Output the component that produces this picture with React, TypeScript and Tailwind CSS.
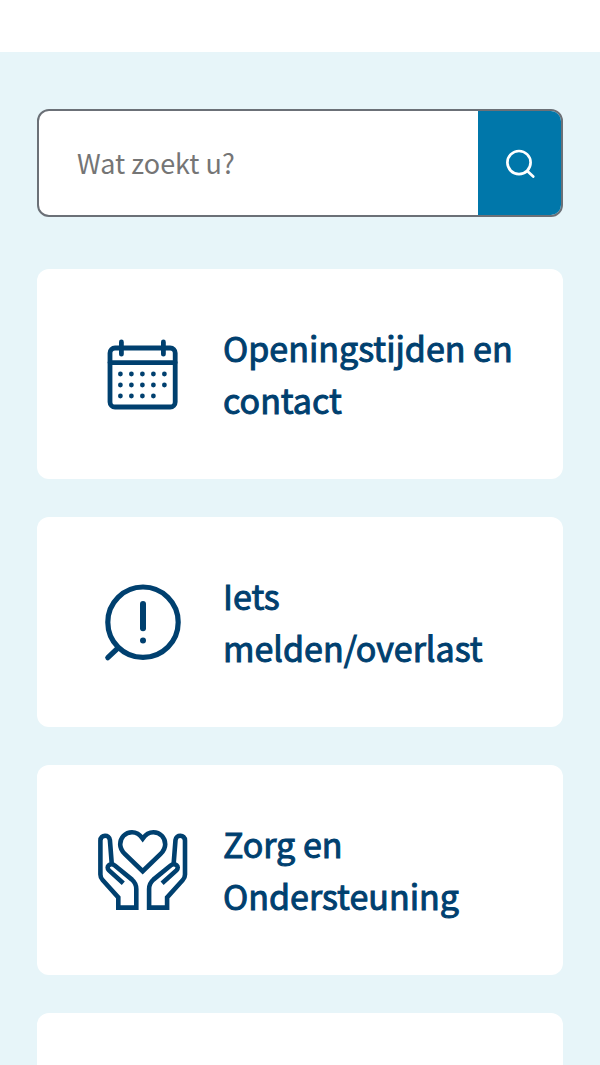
import type { ReactNode } from 'react'

function CalendarIcon() {
  return (
    <svg viewBox="0 0 90 90" className="size-[90px] shrink-0" fill="none" stroke="currentColor" strokeWidth="4.8" strokeLinecap="round" aria-hidden="true">
      <rect x="12" y="19" width="65.2" height="59" rx="5" />
      <path d="M12 33.6H77.2M23.4 13V25.2M65.4 13V25.2" />
      <g fill="currentColor" stroke="none">
        {[45, 56, 67].map((y) =>
          [22.4, 33.4, 44.4, 55.4, 66.4]
            .filter((x) => y < 67 || x < 66)
            .map((x) => <circle key={`${x}-${y}`} cx={x} cy={y} r="2.4" />)
        )}
      </g>
    </svg>
  )
}

function ReportIcon() {
  return (
    <svg viewBox="0 0 90 90" className="size-[90px] shrink-0" fill="none" stroke="currentColor" strokeWidth="5.2" strokeLinecap="round" aria-hidden="true">
      <circle cx="45" cy="45.2" r="35.2" />
      <path d="M20 71L9.8 80.7" />
      <path d="M45 27V51.3" strokeWidth="6" />
      <circle cx="45" cy="63.5" r="3" fill="currentColor" stroke="none" />
    </svg>
  )
}

function HandPath() {
  return (
    <path d="M13.8 39.4L11.9 15C11.4 9.2 2.4 9.4 2.4 15.5V49.5C2.4 52 3 53.3 4.6 55L20.3 72.4V82.6H38.3V64C38.3 59.6 37.4 57.6 34 54.6L16.8 40.5C12.4 37.2 7.2 41.6 11 45.4L25.3 58.3" />
  )
}

function CareIcon() {
  return (
    <svg viewBox="0 0 90 90" className="size-[90px] shrink-0" fill="none" stroke="currentColor" strokeWidth="4.6" aria-hidden="true">
      <path d="M44.7 13.6C41.2 8.6 37.8 7.2 34 7.2C27.2 7.2 22.2 12.6 22.2 19.2C22.2 23.4 24 26.2 27 29.2L44.7 46.2L62.4 29.2C65.4 26.2 67.2 23.4 67.2 19.2C67.2 12.6 62.2 7.2 55.4 7.2C51.6 7.2 48.2 8.6 44.7 13.6Z" />
      <HandPath />
      <g transform="translate(89.4 0) scale(-1 1)">
        <HandPath />
      </g>
    </svg>
  )
}

function TopTask({ icon, children }: { icon?: ReactNode; children?: ReactNode }) {
  return (
    <li>
      <a
        href="#"
        className="flex min-h-[210px] items-center gap-[35px] rounded-xl bg-white pr-8 pl-[61px] text-[34px] leading-[52px] text-[#00406f] [-webkit-text-stroke:1px_#00406f]"
      >
        {icon}
        <span>{children}</span>
      </a>
    </li>
  )
}

export default function App() {
  return (
    <div className="h-screen overflow-hidden bg-[#e7f5f9] font-['Noto_Sans_CJK_SC',sans-serif]">
      <header className="h-[52px] bg-white" />
      <main className="px-[37px] pt-[57px]">
        <form role="search" className="flex h-[108px] overflow-hidden rounded-xl border-2 border-[#6b7077] bg-white">
          <input
            type="search"
            aria-label="Wat zoekt u?"
            placeholder="Wat zoekt u?"
            className="min-w-0 flex-1 pl-[38px] text-[27px] outline-none placeholder:text-[#757575]"
          />
          <button type="button" aria-label="Zoeken" className="flex w-[83px] items-center justify-center bg-[#0077aa] text-white">
            <svg viewBox="0 0 30 30" className="size-[30px]" fill="none" stroke="currentColor" strokeWidth="2.7" strokeLinecap="round" aria-hidden="true">
              <circle cx="14" cy="14.6" r="11.6" />
              <path d="M22.3 23L28.2 28.5" />
            </svg>
          </button>
        </form>

        <ul className="mt-[52px] flex flex-col gap-[38px]">
          <TopTask icon={<CalendarIcon />}>Openingstijden en contact</TopTask>
          <TopTask icon={<ReportIcon />}>Iets melden/overlast</TopTask>
          <TopTask icon={<CareIcon />}>Zorg en Ondersteuning</TopTask>
          <TopTask />
        </ul>
      </main>
    </div>
  )
}
